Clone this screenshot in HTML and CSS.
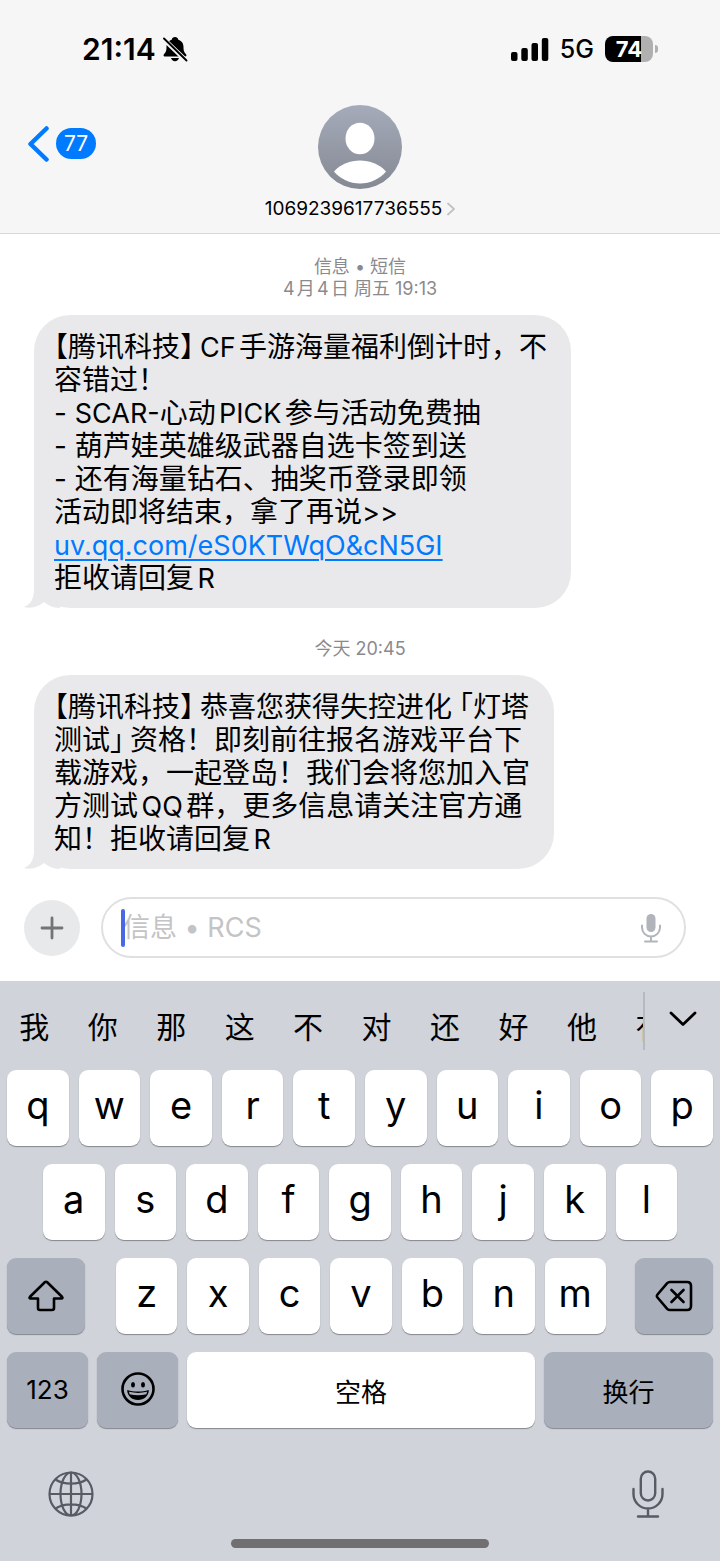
FILE: index.html
```html
<!DOCTYPE html>
<html lang="zh-CN">
<head>
<meta charset="utf-8">
<meta name="viewport" content="width=device-width, initial-scale=1">
<title>信息</title>
<link rel="stylesheet" href="styles.css">
</head>
<body>
<div class="phone">
  <header class="top">
    <div class="status">
      <div class="status-side">
        <span class="clock">21:14</span>
        <svg class="bell" viewBox="0 0 26 26" aria-hidden="true">
          <path d="M13 1c-1.700 0-3 1.100-3.300 2.700C6 4.800 4.500 7.600 4.500 11c0 4.200-1 5.600-2.500 7.200-.8.900-.5 2.300.8 2.300h20.400c1.300 0 1.600-1.400.8-2.300C22.500 16.600 21.500 15.200 21.500 11c0-3.400-1.500-6.200-5.200-7.300C16 2.100 14.700 1 13 1z"/>
          <path d="M9 22h8c-.5 2-2 3.200-4 3.200S9.500 24 9 22z"/>
          <path d="M1 2.500 25 25.500" stroke="#f6f6f6" stroke-width="4.600"/>
          <path d="M2 2.500 24.500 24.500" stroke="#000" stroke-width="1.900" stroke-linecap="round"/>
        </svg>
      </div>
      <div class="status-side">
        <svg class="signal" viewBox="0 0 38 24" aria-hidden="true">
          <rect x="0" y="15" width="6.500" height="9" rx="2"/>
          <rect x="10.300" y="11" width="6.500" height="13" rx="2"/>
          <rect x="20.500" y="6" width="6.500" height="18" rx="2"/>
          <rect x="30.800" y="1" width="6.500" height="23" rx="2"/>
        </svg>
        <span class="network">5G</span>
        <span class="battery"><span class="battery-body">74</span><span class="battery-tip"></span></span>
      </div>
    </div>
    <div class="nav">
      <a class="back" href="#" aria-label="返回">
        <svg class="back-arrow" viewBox="0 0 22 36" aria-hidden="true"><path d="M18.500 2.500 2.500 18l16 15.500" fill="none" stroke="#007aff" stroke-width="4.500" stroke-linecap="round" stroke-linejoin="round"/></svg>
        <span class="unread">77</span>
      </a>
      <a class="contact" href="#">
        <svg class="avatar" viewBox="0 0 84 84" aria-hidden="true">
          <defs><linearGradient id="avatar-fill" x1="0" y1="0" x2="0" y2="1"><stop offset="0" stop-color="#a5abba"/><stop offset="1" stop-color="#858993"/></linearGradient></defs>
          <circle cx="42" cy="42" r="42" fill="url(#avatar-fill)"/>
          <ellipse cx="42" cy="33.500" rx="14.500" ry="15.800" fill="#fff"/>
          <path d="M16 66.500C23 59 32 55.500 42 55.500s19 3.500 26 11C62 74 52 78.500 42 78.500S22 74 16 66.500z" fill="#fff"/>
        </svg>
        <span class="contact-name">1069239617736555
          <svg class="more" viewBox="0 0 8 14" aria-hidden="true"><path d="M1 1.500 7 7l-6 5.500" fill="none" stroke="#c2c2c5" stroke-width="1.800" stroke-linecap="round" stroke-linejoin="round"/></svg>
        </span>
      </a>
    </div>
  </header>

  <main class="thread">
    <p class="stamp">信息 • 短信<br>4月4日 周五 19:13</p>
    <div class="bubble">
      <span class="lead">【</span>腾讯科技<span class="close">】</span><span class="latin">CF</span>手游海量福利倒计时，不<br>
      容错过！<br>
      - <span class="latin">SCAR-</span>心动<span class="latin">PICK</span>参与活动免费抽<br>
      - 葫芦娃英雄级武器自选卡签到送<br>
      - 还有海量钻石、抽奖币登录即领<br>
      活动即将结束，拿了再说<span class="latin">&gt;&gt;</span><br>
      <a class="link latin" href="#">uv.qq.com/eS0KTWqO&amp;cN5GI</a><br>
      拒收请回复<span class="latin">R</span>
      <svg class="tail" viewBox="0 0 36 40" aria-hidden="true"><path d="M10 0v22c0 8-3 14-10 17 8 2 15-1 20-5 4 3 9 6 16 6V0z" fill="#e9e9eb"/></svg>
    </div>
    <p class="stamp">今天 20:45</p>
    <div class="bubble">
      <span class="lead">【</span>腾讯科技<span class="close">】</span>恭喜您获得失控进化<span class="open">「</span>灯塔<br>
      测试<span class="close">」</span>资格！即刻前往报名游戏平台下<br>
      载游戏，一起登岛！我们会将您加入官<br>
      方测试<span class="latin">QQ</span>群，更多信息请关注官方通<br>
      知！拒收请回复<span class="latin">R</span>
      <svg class="tail" viewBox="0 0 36 40" aria-hidden="true"><path d="M10 0v22c0 8-3 14-10 17 8 2 15-1 20-5 4 3 9 6 16 6V0z" fill="#e9e9eb"/></svg>
    </div>
  </main>

  <form class="composer">
    <button class="add" type="button" aria-label="添加">
      <svg class="add-icon" viewBox="0 0 24 24" aria-hidden="true"><path d="M12 2v20M2 12h20" stroke="#737478" stroke-width="2.800" stroke-linecap="round"/></svg>
    </button>
    <div class="field">
      <span class="caret"></span>
      <input class="entry" type="text" placeholder="信息 • RCS" aria-label="信息">
      <button class="dictate" type="button" aria-label="听写">
        <svg class="dictate-icon" viewBox="0 0 22 30" aria-hidden="true">
          <rect x="6.500" y="1" width="9" height="18" rx="4.500" fill="#b1b4ba"/>
          <path d="M2 12.500V14.500a9 9 0 0 0 18 0V12.500M11 23.500V28M5 28.500h12" fill="none" stroke="#b1b4ba" stroke-width="2" stroke-linecap="round"/>
        </svg>
      </button>
    </div>
  </form>

  <section class="keyboard" aria-label="键盘">
    <div class="candidates">
      <div class="words">
        <button class="word" type="button">我</button><button class="word" type="button">你</button><button class="word" type="button">那</button><button class="word" type="button">这</button><button class="word" type="button">不</button><button class="word" type="button">对</button><button class="word" type="button">还</button><button class="word" type="button">好</button><button class="word" type="button">他</button><button class="word" type="button">有</button>
      </div>
      <button class="expand" type="button" aria-label="展开">
        <svg class="expand-icon" viewBox="0 0 28 16" aria-hidden="true"><path d="M2 2l12 11.500L26 2" fill="none" stroke="#000" stroke-width="2.800" stroke-linecap="round" stroke-linejoin="round"/></svg>
      </button>
    </div>
    <div class="keys">
      <div class="row">
        <button class="key" type="button">q</button><button class="key" type="button">w</button><button class="key" type="button">e</button><button class="key" type="button">r</button><button class="key" type="button">t</button><button class="key" type="button">y</button><button class="key" type="button">u</button><button class="key" type="button">i</button><button class="key" type="button">o</button><button class="key" type="button">p</button>
      </div>
      <div class="row row-inset">
        <button class="key" type="button">a</button><button class="key" type="button">s</button><button class="key" type="button">d</button><button class="key" type="button">f</button><button class="key" type="button">g</button><button class="key" type="button">h</button><button class="key" type="button">j</button><button class="key" type="button">k</button><button class="key" type="button">l</button>
      </div>
      <div class="row row-edges">
        <button class="key dark edge" type="button" aria-label="大写">
          <svg class="shift-icon" viewBox="0 0 36 32" aria-hidden="true"><path d="M16.800 2.200 2 16.800c-.8.900-.5 1.700.6 1.700H10v9.500c0 1.200.8 2 2 2h12c1.200 0 2-.8 2-2v-9.500h7.400c1.100 0 1.400-.8.600-1.700L19.200 2.200c-.7-.7-1.700-.7-2.400 0z" fill="none" stroke="#000" stroke-width="2.600" stroke-linejoin="round"/></svg>
        </button>
        <div class="row letters">
          <button class="key" type="button">z</button><button class="key" type="button">x</button><button class="key" type="button">c</button><button class="key" type="button">v</button><button class="key" type="button">b</button><button class="key" type="button">n</button><button class="key" type="button">m</button>
        </div>
        <button class="key dark edge" type="button" aria-label="删除">
          <svg class="delete-icon" viewBox="0 0 38 32" aria-hidden="true"><path d="M15 2h17c2.500 0 4 1.500 4 4v20c0 2.500-1.500 4-4 4H15c-1.200 0-2-.4-2.800-1.200L2.500 17.500c-.8-1-.8-2 0-3L12.200 3.200C13 2.400 13.800 2 15 2zM16.500 10l12 12M28.500 10l-12 12" fill="none" stroke="#000" stroke-width="2.600" stroke-linecap="round" stroke-linejoin="round"/></svg>
        </button>
      </div>
      <div class="row row-bottom">
        <button class="key dark small" type="button">123</button>
        <button class="key dark small" type="button" aria-label="表情">
          <svg class="emoji-icon" viewBox="0 0 34 34" aria-hidden="true">
            <circle cx="17" cy="17" r="15.500" fill="none" stroke="#000" stroke-width="2.600"/>
            <ellipse cx="12" cy="12.800" rx="2" ry="2.700"/><ellipse cx="22" cy="12.800" rx="2" ry="2.700"/>
            <path d="M6.200 18c3.500 1.200 7 1.500 10.800 1.500s7.300-.3 10.800-1.500c0 6-4.800 10-10.800 10S6.200 24 6.200 18z"/>
            <path d="M8 19.800c6 1.500 12 1.500 18 0l-.6 2.400c-5.600 1.500-11.200 1.500-16.800 0z" fill="#a9afbb"/>
          </svg>
        </button>
        <button class="key text space" type="button">空格</button>
        <button class="key dark text enter" type="button">换行</button>
      </div>
    </div>
    <div class="tools">
      <button class="tool" type="button" aria-label="切换键盘">
        <svg class="globe" viewBox="0 0 46 46" aria-hidden="true"><g fill="none" stroke="#565b64" stroke-width="2.200"><circle cx="23" cy="23" r="21.500"/><ellipse cx="23" cy="23" rx="10.500" ry="21.500"/><path d="M23 1.500v43M1.500 23h43M7.500 8.500C16 14 30 14 38.500 8.500M7.500 37.500C16 32 30 32 38.500 37.500"/></g></svg>
      </button>
      <button class="tool" type="button" aria-label="语音输入">
        <svg class="mic" viewBox="0 0 32 48" aria-hidden="true"><g fill="none" stroke="#565b64" stroke-width="2.400" stroke-linecap="round"><rect x="8.800" y="1.500" width="14.400" height="29" rx="7.200"/><path d="M1.500 19v5a14.500 14.500 0 0 0 29 0v-5M16 38.500V46M6 46.500h20"/></g></svg>
      </button>
    </div>
    <div class="home"></div>
  </section>
</div>
</body>
</html>
```
FILE: styles.css
```css
* { box-sizing: border-box; }

body {
  margin: 0;
  background: #fff;
  color: #000;
  font-family: Inter, "Noto Sans CJK SC", sans-serif;
}

button {
  margin: 0;
  padding: 0;
  border: 0;
  background: none;
  color: inherit;
  font: inherit;
}

svg { display: block; }

.phone {
  display: flex;
  flex-direction: column;
  min-height: 100vh;
}

/* Status bar and navigation */
.top {
  background: #f6f6f6;
  border-bottom: 1px solid #d8d8da;
  padding-bottom: 12px;
}

.status {
  display: flex;
  justify-content: space-between;
  align-items: center;
  height: 98px;
  padding: 0 62px 0 82px;
}

.status-side { display: flex; align-items: center; }
.clock { font-size: 30px; font-weight: 600; }
.bell { width: 26px; height: 26px; margin-left: 6px; }
.signal { width: 38px; height: 24px; }
.network { margin: 0 11px; font-size: 25px; font-weight: 500; }
.battery { display: flex; align-items: center; gap: 2px; }

.battery-body {
  width: 48px;
  height: 26px;
  border-radius: 8px;
  background: linear-gradient(to right, #000 74%, #b0b0b1 74%);
  color: #fff;
  font-size: 22px;
  font-weight: 700;
  line-height: 26px;
  text-align: center;
}

.battery-tip {
  width: 3px;
  height: 8px;
  border-radius: 0 3px 3px 0;
  background: #b0b0b1;
}

.nav {
  display: grid;
  grid-template-columns: 1fr auto 1fr;
  padding: 7px 28px 0;
}

.nav a { color: inherit; text-decoration: none; }

.back {
  display: flex;
  align-items: center;
  align-self: start;
  gap: 6px;
  height: 77px;
}

.back-arrow { width: 22px; height: 36px; }

.unread {
  padding: 0 8px;
  border-radius: 16px;
  background: #007aff;
  color: #fff;
  font-size: 21px;
  line-height: 31px;
}

.contact {
  display: flex;
  flex-direction: column;
  align-items: center;
  gap: 8px;
}

.avatar { width: 84px; height: 84px; }

.contact-name {
  display: flex;
  align-items: center;
  gap: 5px;
  font-size: 19px;
  line-height: 24px;
}

.more { width: 8px; height: 14px; }

/* Messages */
.thread {
  display: flex;
  flex-direction: column;
  align-items: flex-start;
  padding: 22px 34px 0;
}

.stamp {
  align-self: stretch;
  margin: 0;
  color: #8a8a8e;
  font-size: 18px;
  line-height: 22px;
  text-align: center;
  text-autospace: normal;
}

.bubble {
  position: relative;
  isolation: isolate;
  margin: 15px 0 30px;
  padding: 16px 24px 13px 20px;
  border-radius: 36px;
  background: #e9e9eb;
  font-size: 28px;
  line-height: 33px;
  text-autospace: normal;
}

.bubble:last-child { margin-bottom: 28px; }

.latin { font-size: 27px; }
.lead, .open, .close { font-feature-settings: "halt"; }
.open { margin-left: 7px; }
.close { margin-right: 6px; }

.link {
  color: #007aff;
  text-decoration-thickness: 2px;
  text-underline-offset: 4px;
}

.tail {
  position: absolute;
  z-index: -1;
  left: -10px;
  bottom: 0;
  width: 36px;
  height: 40px;
}

/* Composer */
.composer {
  display: flex;
  align-items: center;
  gap: 21px;
  padding: 0 34px 23px 24px;
}

.add {
  display: grid;
  place-items: center;
  flex: none;
  width: 56px;
  height: 56px;
  border-radius: 50%;
  background: #e8e9eb;
}

.add-icon { width: 24px; height: 24px; }

.field {
  position: relative;
  display: flex;
  align-items: center;
  flex: 1;
  min-width: 0;
  height: 61px;
  padding: 0 22px 0 20px;
  border: 2px solid #e0e0e2;
  border-radius: 31px;
}

.caret {
  position: absolute;
  left: 18px;
  top: 10px;
  width: 4px;
  height: 38px;
  border-radius: 2px;
  background: #4769e6;
}

.entry {
  flex: 1;
  min-width: 0;
  padding: 0;
  border: 0;
  outline: 0;
  background: none;
  font: inherit;
  font-size: 27px;
}

.entry::placeholder { color: #c4c4c6; opacity: 1; }
.dictate-icon { width: 22px; height: 30px; }

/* Keyboard */
.keyboard {
  flex: 1;
  background: #d0d3da;
}

.candidates {
  display: flex;
  height: 89px;
  padding: 11px 0 20px;
}

.words {
  display: flex;
  flex: 1;
  min-width: 0;
  overflow: hidden;
  border-right: 2px solid #b6b9c0;
}

.word {
  flex: 0 0 68px;
  flex-basis: 10.65%;
  padding-top: 8px;
  font-size: 30px;
}

.expand {
  display: grid;
  justify-items: center;
  align-items: start;
  width: 75px;
  padding-top: 19px;
}

.expand-icon { width: 28px; height: 16px; }

.keys {
  display: flex;
  flex-direction: column;
  gap: 18px;
  padding: 0 7px;
}

.row { display: flex; gap: 10px; }
.row-inset { padding: 0 36px; }
.row-edges { gap: 0; }
.row-bottom { gap: 9px; }
.letters { flex: 1; margin: 0 29px 0 31px; }

.key {
  display: grid;
  place-items: center;
  flex: 1;
  min-width: 0;
  height: 76px;
  padding-bottom: 6px;
  border-radius: 9px;
  background: #fff;
  box-shadow: 0 1px 1px #84878d;
  font-size: 38px;
}

.dark { padding-bottom: 0; background: #a9afbb; }
.edge { flex: none; width: 78px; }
.small { flex: none; width: 81px; padding-bottom: 2px; font-size: 26px; }
.text { padding: 0; font-size: 26px; }
.enter { flex: none; width: 169px; }

.shift-icon { width: 36px; height: 32px; }
.delete-icon { width: 38px; height: 32px; }
.emoji-icon { width: 34px; height: 34px; }

.tools {
  display: flex;
  justify-content: space-between;
  align-items: center;
  height: 48px;
  margin-top: 42px;
  padding: 0 56px 0 48px;
}

.globe { width: 46px; height: 46px; }
.mic { width: 32px; height: 48px; }

.home {
  width: 258px;
  max-width: 60%;
  height: 9px;
  margin: 21px auto 13px;
  border-radius: 5px;
  background: #716f70;
}
```
